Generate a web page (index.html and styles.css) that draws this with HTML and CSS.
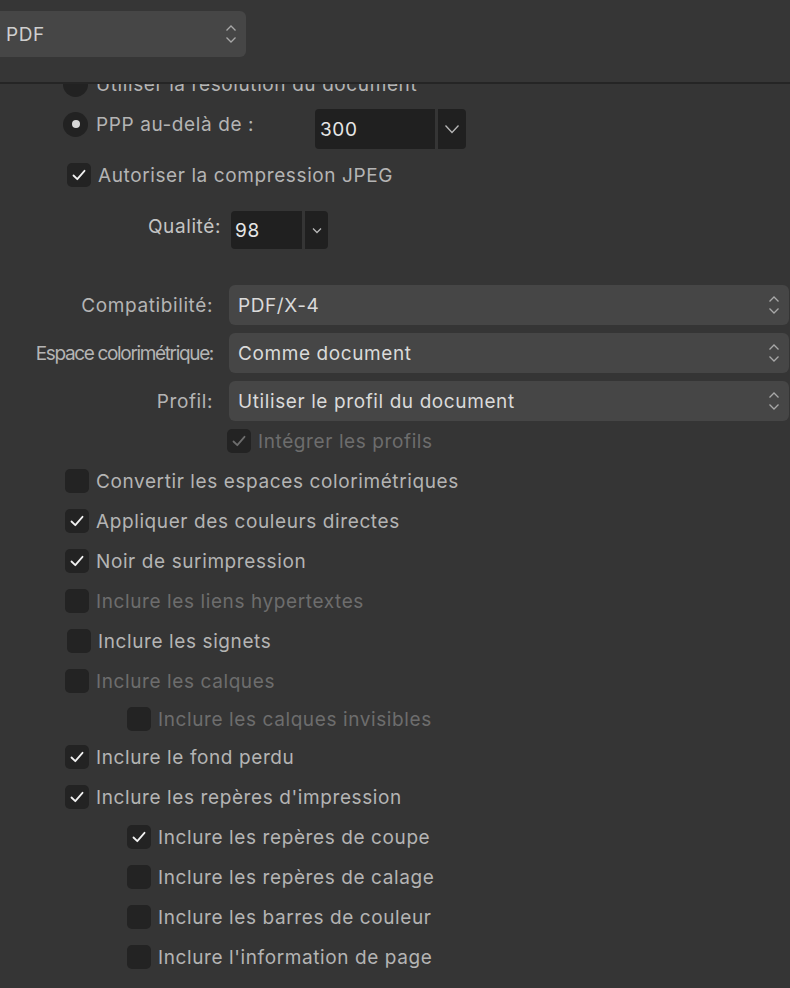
FILE: index.html
```html
<!DOCTYPE html>
<html lang="fr">
<head>
<meta charset="utf-8">
<title>PDF export</title>
<link rel="stylesheet" href="styles.css">
</head>
<body>
<header class="header">
  <div class="select select-top">
    <span class="select-value">PDF</span>
    <svg class="updown" width="12" height="20" viewBox="0 0 12 20"><path d="M1.5 6.5 L6 2 L10.5 6.5" /><path d="M1.5 13.5 L6 18 L10.5 13.5" /></svg>
  </div>
</header>
<main class="panel">
  <div class="content">
    <div class="row row-radio first">
      <span class="radio"></span>
      <span class="label">Utiliser la résolution du document</span>
    </div>
    <div class="row row-radio">
      <span class="radio on"></span>
      <span class="label label-ppp">PPP au-delà de :</span>
      <div class="combo combo-ppp">
        <span class="combo-field">300</span>
        <span class="combo-btn"><svg width="16" height="10" viewBox="0 0 16 10"><path d="M1.5 1.5 L8 8.5 L14.5 1.5" /></svg></span>
      </div>
    </div>
    <div class="row row-jpeg">
      <span class="check on"><svg viewBox="0 0 24 24"><path d="M6.5 12.5 L10.3 16.2 L17.5 7.8" /></svg></span>
      <span class="label">Autoriser la compression JPEG</span>
    </div>
    <div class="row row-quality">
      <span class="label label-q">Qualité:</span>
      <div class="combo combo-q">
        <span class="combo-field">98</span>
        <span class="combo-btn"><svg width="10" height="7" viewBox="0 0 10 7"><path d="M1 1.5 L5 5.5 L9 1.5" /></svg></span>
      </div>
    </div>
    <div class="form">
      <span class="form-label">Compatibilité:</span>
      <div class="select"><span class="select-value">PDF/X-4</span><svg class="updown" width="12" height="20" viewBox="0 0 12 20"><path d="M1.5 6.5 L6 2 L10.5 6.5" /><path d="M1.5 13.5 L6 18 L10.5 13.5" /></svg></div>
      <span class="form-label condensed">Espace colorimétrique:</span>
      <div class="select"><span class="select-value">Comme document</span><svg class="updown" width="12" height="20" viewBox="0 0 12 20"><path d="M1.5 6.5 L6 2 L10.5 6.5" /><path d="M1.5 13.5 L6 18 L10.5 13.5" /></svg></div>
      <span class="form-label">Profil:</span>
      <div class="select"><span class="select-value">Utiliser le profil du document</span><svg class="updown" width="12" height="20" viewBox="0 0 12 20"><path d="M1.5 6.5 L6 2 L10.5 6.5" /><path d="M1.5 13.5 L6 18 L10.5 13.5" /></svg></div>
    </div>
    <div class="row row-embed disabled">
      <span class="check on"><svg viewBox="0 0 24 24"><path d="M6.5 12.5 L10.3 16.2 L17.5 7.8" /></svg></span>
      <span class="label">Intégrer les profils</span>
    </div>
    <div class="row">
      <span class="check"></span>
      <span class="label">Convertir les espaces colorimétriques</span>
    </div>
    <div class="row">
      <span class="check on"><svg viewBox="0 0 24 24"><path d="M6.5 12.5 L10.3 16.2 L17.5 7.8" /></svg></span>
      <span class="label">Appliquer des couleurs directes</span>
    </div>
    <div class="row">
      <span class="check on"><svg viewBox="0 0 24 24"><path d="M6.5 12.5 L10.3 16.2 L17.5 7.8" /></svg></span>
      <span class="label">Noir de surimpression</span>
    </div>
    <div class="row disabled">
      <span class="check"></span>
      <span class="label">Inclure les liens hypertextes</span>
    </div>
    <div class="row row-shift">
      <span class="check"></span>
      <span class="label">Inclure les signets</span>
    </div>
    <div class="row disabled">
      <span class="check"></span>
      <span class="label">Inclure les calques</span>
    </div>
    <div class="row row-sub row-short disabled">
      <span class="check"></span>
      <span class="label">Inclure les calques invisibles</span>
    </div>
    <div class="row">
      <span class="check on"><svg viewBox="0 0 24 24"><path d="M6.5 12.5 L10.3 16.2 L17.5 7.8" /></svg></span>
      <span class="label">Inclure le fond perdu</span>
    </div>
    <div class="row">
      <span class="check on"><svg viewBox="0 0 24 24"><path d="M6.5 12.5 L10.3 16.2 L17.5 7.8" /></svg></span>
      <span class="label">Inclure les repères d'impression</span>
    </div>
    <div class="row row-sub">
      <span class="check on"><svg viewBox="0 0 24 24"><path d="M6.5 12.5 L10.3 16.2 L17.5 7.8" /></svg></span>
      <span class="label">Inclure les repères de coupe</span>
    </div>
    <div class="row row-sub">
      <span class="check"></span>
      <span class="label">Inclure les repères de calage</span>
    </div>
    <div class="row row-sub">
      <span class="check"></span>
      <span class="label">Inclure les barres de couleur</span>
    </div>
    <div class="row row-sub">
      <span class="check"></span>
      <span class="label">Inclure l'information de page</span>
    </div>
  </div>
</main>
</body>
</html>
```

FILE: styles.css
```css
* { box-sizing: border-box; }
html, body {
  margin: 0;
  padding: 0;
  background: #353535;
  width: 790px;
  height: 988px;
  overflow: hidden;
  font-family: "Inter", "Roboto", sans-serif;
  font-size: 19px;
  letter-spacing: 0.6px;
  color: #b4b4b4;
}
.header {
  height: 84px;
  border-bottom: 2px solid #252525;
  padding-top: 11px;
  background: #363636;
}
.select {
  height: 40px;
  background: #464646;
  border-radius: 6px;
  display: flex;
  align-items: center;
  justify-content: space-between;
  padding: 0 9px 0 9px;
  color: #dadada;
}
.select-top {
  width: 252px;
  height: 46px;
  margin-left: -6px;
  padding-left: 12px;
  padding-right: 9px;
  color: #cfcfcf;
}
.updown path {
  fill: none;
  stroke: #a8a8a8;
  stroke-width: 1.3;
}
.panel {
  height: 904px;
  overflow: hidden;
}
.content {
  padding-left: 63px;
}
.row {
  height: 40px;
  display: flex;
  align-items: center;
  gap: 7px;
  margin-left: 2px;
}
.label { padding-top: 1px; }
.row-radio { margin-left: 0; gap: 8px; }
.first { margin-top: -20px; }
.radio {
  width: 25px;
  height: 25px;
  border-radius: 50%;
  background: #222222;
  display: flex;
  align-items: center;
  justify-content: center;
  flex: none;
}
.radio.on::after {
  content: "";
  width: 8px;
  height: 8px;
  border-radius: 50%;
  background: #d8d8d8;
}
.check {
  width: 24px;
  height: 24px;
  border-radius: 5px;
  background: #232323;
  flex: none;
  display: flex;
}
.check svg { width: 24px; height: 24px; }
.check path {
  fill: none;
  stroke: #f2f2f2;
  stroke-width: 1.8;
  stroke-linecap: round;
  stroke-linejoin: round;
}
.disabled .label { color: #6d6d6d; }
.disabled .check path { stroke: #6d6d6d; }
.combo {
  display: flex;
  gap: 3px;
}
.combo-field {
  background: #202020;
  color: #e6e6e6;
  display: flex;
  align-items: center;
  border-radius: 4px 0 0 4px;
}
.combo-btn {
  background: #202020;
  display: flex;
  align-items: center;
  justify-content: center;
  border-radius: 0 4px 4px 0;
}
.combo-btn path {
  fill: none;
  stroke: #b8b8b8;
  stroke-width: 1.3;
}
.label-ppp { width: 211px; flex: none; }
.combo-ppp { margin-top: 10px; }
.combo-ppp .combo-field { width: 120px; height: 40px; padding-left: 5px; }
.combo-ppp .combo-btn { width: 28px; height: 40px; }
.row-jpeg { height: 62px; margin-left: 4px; }
.row-quality {
  height: 48px;
  gap: 10px;
  margin-left: 0;
}
.label-q {
  width: 158px;
  flex: none;
  text-align: right;
  color: #c4c4c4;
  margin-top: -8px;
}
.combo-q .combo-field { width: 71px; height: 38px; padding-left: 4px; }
.combo-q .combo-btn { width: 23px; height: 38px; }
.form {
  margin-top: 31px;
  margin-left: -63px;
  display: grid;
  grid-template-columns: 213px 560px;
  column-gap: 16px;
  row-gap: 8px;
  align-items: center;
}
.form-label {
  text-align: right;
  color: #b4b4b4;
}
.condensed { letter-spacing: -1.35px; }
.row-embed { margin-left: 164px; }
.row-shift { margin-left: 4px; }
.row-sub { margin-left: 64px; }
.row-short { height: 36px; }
```
